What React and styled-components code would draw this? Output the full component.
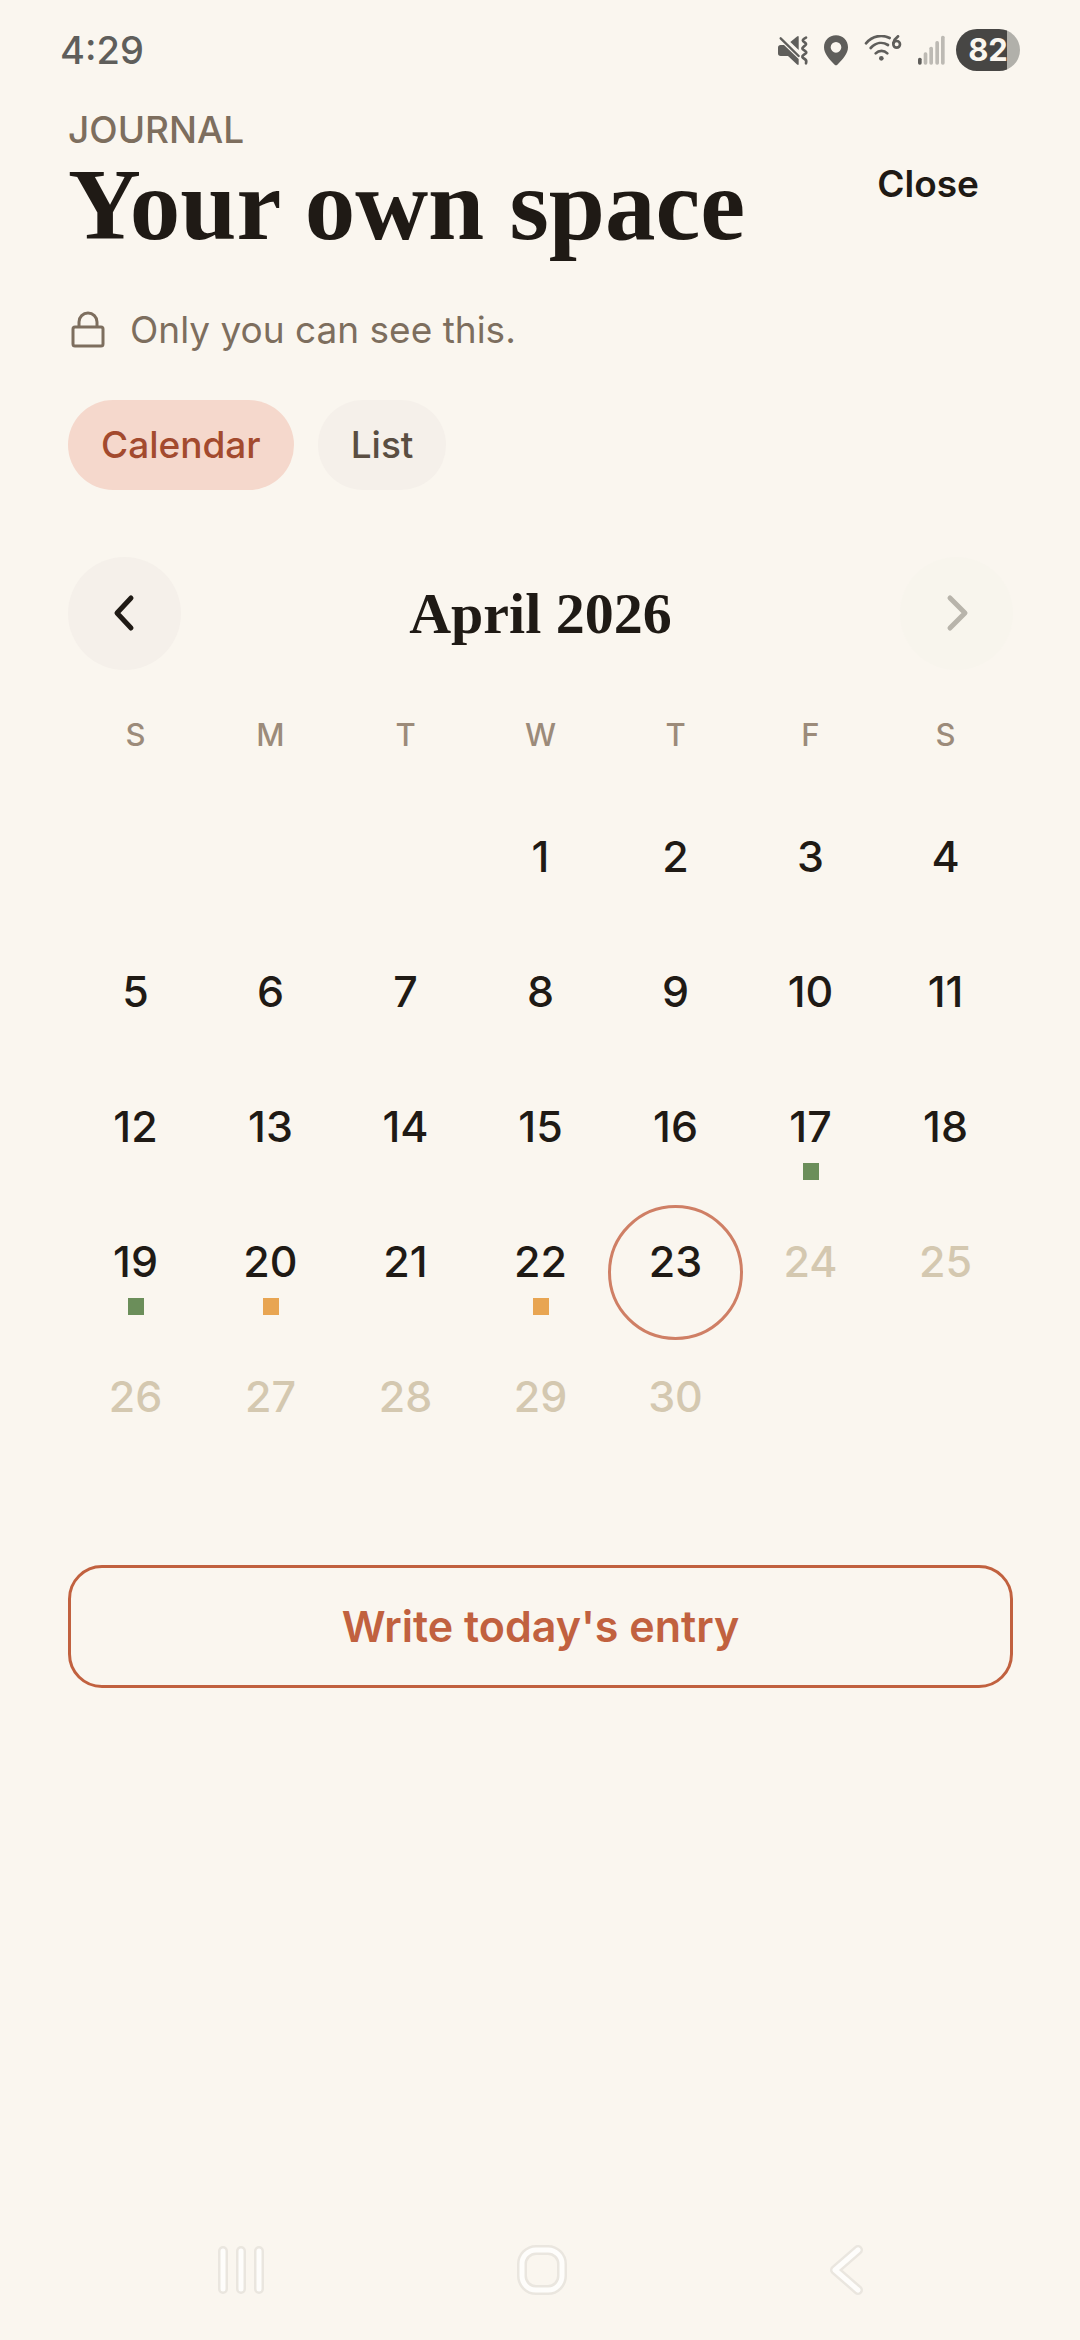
import React, { useState } from 'react'
import styled, { createGlobalStyle } from 'styled-components'

const weekdays = ['Sunday', 'Monday', 'Tuesday', 'Wednesday', 'Thursday', 'Friday', 'Saturday']
const moods = { 17: 'good', 19: 'good', 20: 'okay', 22: 'okay' }
const today = 23
const days = Array.from({ length: 30 }, (_, i) => i + 1)

const StatusBar = () => {
  return (
    <StatusWrapper>
      <time>4:29</time>
      <div className='icons'>
        <svg width='37' height='31' viewBox='45 46 111 93' aria-hidden='true'>
          <path d='M54 84q0-8 8-8h10l44 42v17h-4L84 109H62q-8 0-8-8z' fill='#5f5e5b' />
          <path d='M91 67l21-17h4v41z' fill='#5f5e5b' />
          <path d='M62 56l54 53' stroke='#5f5e5b' strokeWidth='7' strokeLinecap='round' />
          <path
            d='M138 54c-14 7-10 10-4 14s6 6-2 12-6 8 2 13 6 7-2 12-6 8 2 13 4 9 4 13'
            fill='none'
            stroke='#5f5e5b'
            strokeWidth='8'
            strokeLinecap='round'
            strokeLinejoin='round'
          />
        </svg>
        <svg width='32' height='31' viewBox='186 46 96 93' aria-hidden='true'>
          <path
            fillRule='evenodd'
            d='M228 47c21 0 36 15 36 36 0 20-17 37-32 52q-4 4-8 0c-15-15-32-32-32-52 0-21 15-36 36-36zm0 20a16 16 0 1 0 0 32 16 16 0 0 0 0-32z'
            fill='#5f5e5b'
          />
        </svg>
        <svg width='43' height='31' viewBox='312 46 129 93' aria-hidden='true'>
          <g fill='none' stroke='#5f5e5b' strokeWidth='8' strokeLinecap='round'>
            <path d='M318 71c20-23 48-27 71-16' />
            <path d='M332 85c16-17 36-19 52-9' />
            <path d='M347 101c10-10 25-10 35 0' />
            <path d='M414 50q-11 8-14 20' />
            <circle cx='410' cy='74' r='10' />
          </g>
          <circle cx='364' cy='116' r='7' fill='#5f5e5b' />
        </svg>
        <svg width='29' height='31' viewBox='471 46 87 93' aria-hidden='true'>
          <rect x='474' y='114' width='11' height='21' rx='5' fill='#5f5e5b' />
          <g fill='#bdbab4'>
            <rect x='491' y='98' width='11' height='37' rx='5' />
            <rect x='508' y='81' width='11' height='54' rx='5' />
            <rect x='526' y='64' width='11' height='71' rx='5' />
            <rect x='543' y='48' width='11' height='87' rx='5' />
          </g>
        </svg>
        <Battery>82</Battery>
      </div>
    </StatusWrapper>
  )
}

const Calendar = () => {
  return (
    <section>
      <MonthBar>
        <RoundButton type='button' aria-label='Previous month'>
          <svg width='34' height='40' viewBox='0 0 34 40' aria-hidden='true'>
            <path d='M23 4L9 19l14 15' />
          </svg>
        </RoundButton>
        <h2>April 2026</h2>
        <RoundButton type='button' aria-label='Next month' disabled>
          <svg width='34' height='40' viewBox='0 0 34 40' aria-hidden='true'>
            <path d='M10 4l15 15-15 15' />
          </svg>
        </RoundButton>
      </MonthBar>
      <Weekdays>
        {weekdays.map((name) => (
          <abbr key={name} title={name}>
            {name[0]}
          </abbr>
        ))}
      </Weekdays>
      <DayGrid>
        {days.map((day) => (
          <Day key={day} type='button' $today={day === today} disabled={day > today}>
            {day}
            <Dot $mood={moods[day]} />
          </Day>
        ))}
      </DayGrid>
    </section>
  )
}

const SystemNav = () => {
  return (
    <NavWrapper aria-label='System'>
      <button type='button' aria-label='Recent apps'>
        <svg width='50' height='54' viewBox='0 0 50 54'>
          <path className='edge' d='M7 8v38M25 8v38M43 8v38' />
          <path className='core' d='M7 8v38M25 8v38M43 8v38' />
        </svg>
      </button>
      <button type='button' aria-label='Home'>
        <svg width='54' height='54' viewBox='0 0 54 54'>
          <rect className='edge' x='7' y='7' width='40' height='40' rx='14' />
          <rect className='core' x='7' y='7' width='40' height='40' rx='14' />
        </svg>
      </button>
      <button type='button' aria-label='Back'>
        <svg width='40' height='54' viewBox='0 0 40 54'>
          <path className='edge' d='M35 7L12 27l23 20' />
          <path className='core' d='M35 7L12 27l23 20' />
        </svg>
      </button>
    </NavWrapper>
  )
}

const App = () => {
  const [view, setView] = useState('Calendar')
  return (
    <Page>
      <GlobalStyle />
      <StatusBar />
      <Content>
        <Header>
          <div>
            <p>JOURNAL</p>
            <h1>Your own space</h1>
          </div>
          <CloseButton type='button'>Close</CloseButton>
        </Header>
        <Privacy>
          <svg width='40' height='40' viewBox='0 0 40 40' aria-hidden='true'>
            <rect x='5' y='17' width='30' height='19' rx='2' />
            <path d='M11 17v-5a9 9 0 0 1 18 0v5' />
          </svg>
          Only you can see this.
        </Privacy>
        <Tabs>
          {['Calendar', 'List'].map((name) => (
            <Tab
              key={name}
              type='button'
              aria-pressed={view === name}
              $active={view === name}
              onClick={() => setView(name)}
            >
              {name}
            </Tab>
          ))}
        </Tabs>
        <Calendar />
        <WriteButton type='button'>Write today's entry</WriteButton>
      </Content>
      <SystemNav />
    </Page>
  )
}

const GlobalStyle = createGlobalStyle`
  * {
    box-sizing: border-box;
    margin: 0;
    padding: 0;
  }
  body {
    background: #faf6ef;
    color: #1f1a15;
    font-family: Inter, sans-serif;
  }
  button {
    background: transparent;
    border: none;
    color: inherit;
    font-family: inherit;
    cursor: pointer;
  }
`
const Page = styled.div`
  display: flex;
  flex-direction: column;
  min-height: 100vh;
`
const StatusWrapper = styled.div`
  display: flex;
  align-items: center;
  justify-content: space-between;
  height: 100px;
  padding: 0 60px;
  color: #5f5e5b;
  font-size: 38px;
  font-weight: 500;
  .icons {
    display: flex;
    align-items: center;
    gap: 10px;
  }
`
const Battery = styled.span`
  width: 64px;
  border-radius: 21px;
  background: linear-gradient(to right, #474644 80%, #b1b0aa 80%);
  color: #faf6ef;
  font-size: 31px;
  font-weight: 700;
  line-height: 42px;
  text-align: center;
`
const Content = styled.main`
  display: flex;
  flex-direction: column;
  padding: 8px 67px 40px 68px;
`
const Header = styled.header`
  display: flex;
  align-items: center;
  justify-content: space-between;
  p {
    color: #7d6e5e;
    font-size: 37px;
    font-weight: 500;
    line-height: 44px;
  }
  h1 {
    font-family: 'Liberation Serif', serif;
    font-size: 101px;
    font-weight: 700;
    line-height: 106px;
  }
`
const CloseButton = styled.button`
  padding: 22px 34px;
  font-size: 37px;
  font-weight: 600;
`
const Privacy = styled.p`
  display: flex;
  align-items: center;
  gap: 22px;
  margin-top: 46px;
  color: #7d6e5e;
  font-size: 37px;
  line-height: 52px;
  svg {
    fill: none;
    stroke: currentColor;
    stroke-width: 3;
  }
`
const Tabs = styled.div`
  display: flex;
  gap: 24px;
  margin-top: 44px;
`
const Tab = styled.button`
  height: 90px;
  padding: 0 33px 2px;
  border-radius: 45px;
  background: ${({ $active }) => ($active ? '#f5d8cc' : '#f5f0ea')};
  color: ${({ $active }) => ($active ? '#a34a2e' : '#5a4e42')};
  font-size: 37px;
  font-weight: 500;
`
const MonthBar = styled.div`
  display: flex;
  align-items: center;
  justify-content: space-between;
  margin-top: 67px;
  h2 {
    font-family: 'Liberation Serif', serif;
    font-size: 58px;
    font-weight: 700;
    line-height: 64px;
  }
`
const RoundButton = styled.button`
  display: flex;
  align-items: center;
  justify-content: center;
  width: 113px;
  height: 113px;
  border-radius: 50%;
  background: #f5f0ea;
  svg {
    fill: none;
    stroke: currentColor;
    stroke-width: 5;
    stroke-linecap: round;
    stroke-linejoin: round;
  }
  &:disabled {
    background: #f8f5ed;
    color: #b8b4ab;
  }
`
const Weekdays = styled.div`
  display: grid;
  grid-template-columns: repeat(7, 1fr);
  margin-top: 45px;
  color: #9c8b7a;
  font-size: 31px;
  font-weight: 500;
  line-height: 40px;
  text-align: center;
  abbr {
    text-decoration: none;
  }
`
const DayGrid = styled.div`
  display: grid;
  grid-template-columns: repeat(7, 1fr);
  margin-top: 45px;
  /* the month opens on a Wednesday */
  button:first-child {
    grid-column-start: 4;
  }
`
const Day = styled.button`
  display: flex;
  flex-direction: column;
  align-items: center;
  justify-content: center;
  gap: 6px;
  aspect-ratio: 1;
  border: 3px solid ${({ $today }) => ($today ? '#cf7f65' : 'transparent')};
  border-radius: 50%;
  font-size: 43px;
  font-weight: 500;
  line-height: 62px;
  &:disabled {
    color: #d4c8b0;
  }
`
const dotColors = { good: '#6b8e5a', okay: '#e8a552' }
const Dot = styled.span`
  width: 16px;
  height: 17px;
  background: ${({ $mood }) => dotColors[$mood] || 'transparent'};
`
const WriteButton = styled.button`
  margin-top: 90px;
  height: 123px;
  padding-bottom: 2px;
  border: 3px solid #c1613f;
  border-radius: 34px;
  color: #c1613f;
  font-size: 43px;
  font-weight: 600;
`
const NavWrapper = styled.nav`
  display: grid;
  grid-template-columns: repeat(3, 1fr);
  align-items: center;
  height: 140px;
  margin-top: auto;
  padding: 0 86px 0 90px;
  button {
    display: flex;
    justify-content: center;
  }
  svg {
    fill: none;
    stroke-linecap: round;
    stroke-linejoin: round;
  }
  .edge {
    stroke: #eae6df;
    stroke-width: 10;
  }
  .core {
    stroke: #fefdfb;
    stroke-width: 5;
  }
`

export default App
